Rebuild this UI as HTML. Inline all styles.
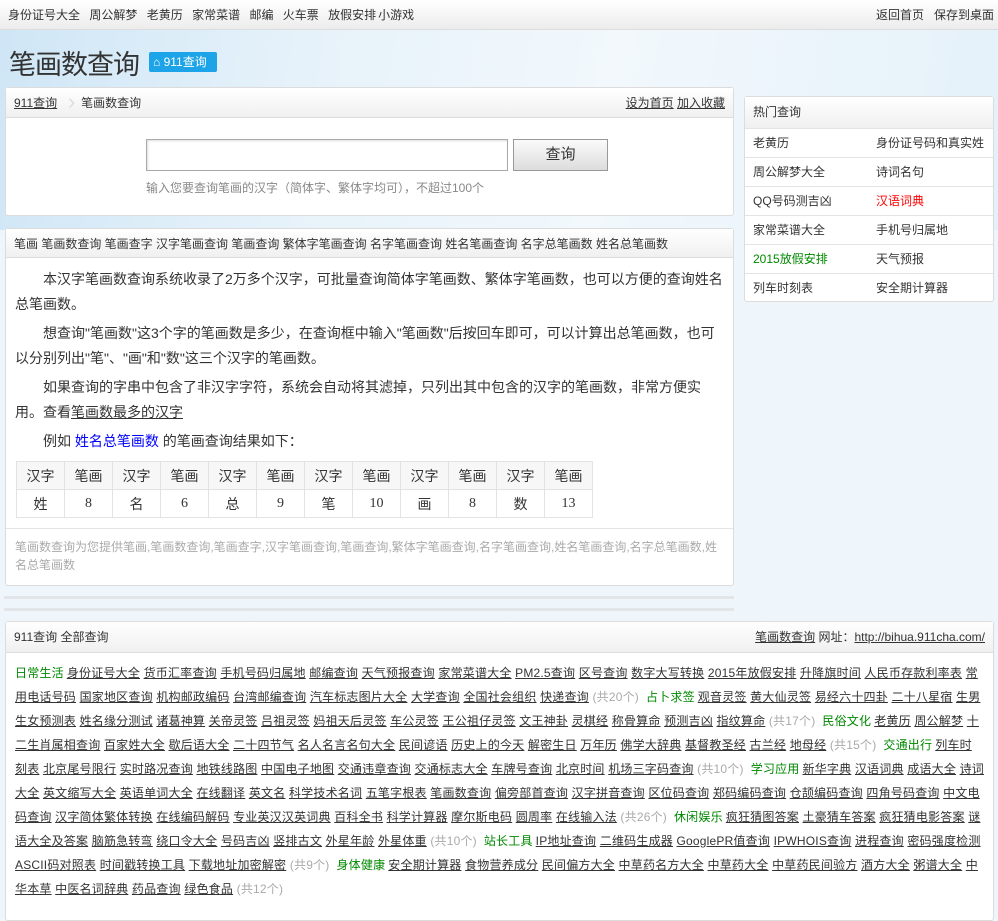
<!DOCTYPE html>
<html><head><meta charset="utf-8"><style>
*{margin:0;padding:0;box-sizing:border-box}
body{width:998px;height:907px;overflow:hidden;background:#eef5fb;font-family:"Liberation Sans","Noto Sans CJK SC",sans-serif;font-size:12px;color:#333;position:relative}
a{color:#333;text-decoration:underline}
.top{position:absolute;left:0;top:0;width:998px;height:30px;background:linear-gradient(#fff,#ececec);border-bottom:1px solid #ddd;font-size:12px;line-height:30px}
.top span{margin-left:8px;margin-right:-2px}
.sky{position:absolute;left:0;top:30px;width:998px;height:200px;background:linear-gradient(100deg,#cfe6f6 0%,#e6f2fa 30%,#f2f8fc 60%,#e4f1fa 100%)}
h1{position:absolute;left:9px;top:43px;font-size:27px;font-weight:normal;color:#333;letter-spacing:-1px}
.badge{position:absolute;left:149px;top:52px;height:20px;width:68px;background:#1ca3e8;color:#fff;font-size:12px;line-height:20px;padding-left:4px;border-radius:2px}
.box{position:absolute;background:#fff;border:1px solid #dcdcdc;border-radius:3px}
.hd{height:30px;background:linear-gradient(#fff,#f0f0f0);border-bottom:1px solid #ddd;line-height:30px;padding-left:8px;font-size:12px}
.p{font-size:14px;line-height:24.5px;text-indent:28px;margin-bottom:5px}
table{border-collapse:collapse;font-family:"Liberation Serif","Noto Sans CJK SC",serif;font-size:14px}
td{border:1px solid #e3e3e3;width:48px;height:28px;text-align:center}
tr:first-child td{background:#f7f7f7}
.all{padding:8px 9px 0 9px;font-size:12px;line-height:24px;letter-spacing:0.2px}
.g{color:#080;margin-right:3px;margin-left:3px}
.c{color:#aaa;margin-right:4px}
.side div.r{height:29px;border-top:1px solid #e4e4e4;line-height:29px;padding-left:8px;font-size:12px;position:relative}
.side div.r span{position:absolute;left:131px}
</style></head><body>
<div class="top"><span>身份证号大全</span> <span>周公解梦</span> <span>老黄历</span> <span>家常菜谱</span> <span>邮编</span> <span>火车票</span> <span>放假安排</span><span style="margin-left:4px">小游戏</span>
<div style="position:absolute;right:4px;top:0">返回首页&nbsp;&nbsp;&nbsp;保存到桌面</div></div>
<div class="sky"></div>
<h1>笔画数查询</h1>
<div class="badge">&#8962; 911查询</div>

<div class="box" style="left:5px;top:87px;width:729px;height:129px">
<div class="hd" style="position:relative"><a>911查询</a><span style="position:absolute;left:62px;top:0;color:#ddd;font-size:22px;line-height:28px">›</span><span style="margin-left:24px">笔画数查询</span>
<span style="position:absolute;right:8px;top:0"><a>设为首页</a> <a>加入收藏</a></span></div>
<div style="position:absolute;left:140px;top:51px;width:362px;height:32px;border:1px solid #aaa;box-shadow:inset 1px 1px 2px #ddd"></div>
<div style="position:absolute;left:507px;top:51px;width:95px;height:32px;border:1px solid #999;background:linear-gradient(#fafafa,#ddd);text-align:center;line-height:30px;font-size:15px">查询</div>
<div style="position:absolute;left:140px;top:91px;color:#888;font-size:12px">输入您要查询笔画的汉字（简体字、繁体字均可），不超过100个</div>
</div>

<div class="box" style="left:5px;top:228px;width:729px;height:358px">
<div class="hd" style="height:29px">笔画 笔画数查询 笔画查字 汉字笔画查询 笔画查询 繁体字笔画查询 名字笔画查询 姓名笔画查询 名字总笔画数 姓名总笔画数</div>
<div style="padding:9px 9px 0 9px">
<p class="p">本汉字笔画数查询系统收录了2万多个汉字，可批量查询简体字笔画数、繁体字笔画数，也可以方便的查询姓名总笔画数。</p>
<p class="p">想查询"笔画数"这3个字的笔画数是多少，在查询框中输入"笔画数"后按回车即可，可以计算出总笔画数，也可以分别列出"笔"、"画"和"数"这三个汉字的笔画数。</p>
<p class="p">如果查询的字串中包含了非汉字字符，系统会自动将其滤掉，只列出其中包含的汉字的笔画数，非常方便实用。查看<a>笔画数最多的汉字</a></p>
<p class="p">例如 <span style="color:#00f">姓名总笔画数</span> 的笔画查询结果如下：</p>
</div>
<table style="position:absolute;left:10px;top:232px">
<tr><td>汉字</td><td>笔画</td><td>汉字</td><td>笔画</td><td>汉字</td><td>笔画</td><td>汉字</td><td>笔画</td><td>汉字</td><td>笔画</td><td>汉字</td><td>笔画</td></tr>
<tr><td>姓</td><td>8</td><td>名</td><td>6</td><td>总</td><td>9</td><td>笔</td><td>10</td><td>画</td><td>8</td><td>数</td><td>13</td></tr></table>
<div style="position:absolute;left:0;top:299px;width:727px;border-top:1px solid #e4e4e4;padding:9px 9px;color:#aaa;font-size:12px;line-height:18px">笔画数查询为您提供笔画,笔画数查询,笔画查字,汉字笔画查询,笔画查询,繁体字笔画查询,名字笔画查询,姓名笔画查询,名字总笔画数,姓名总笔画数</div>
</div>
<div style="position:absolute;left:4px;top:596px;width:730px;height:3px;background:#e2e4e8"></div>
<div style="position:absolute;left:4px;top:608px;width:730px;height:3px;background:#e2e4e8"></div>

<div class="box side" style="left:744px;top:96px;width:250px;height:206px">
<div class="hd" style="height:31px;border-bottom:none">热门查询</div>
<div class="r">老黄历<span>身份证号码和真实姓</span></div>
<div class="r">周公解梦大全<span>诗词名句</span></div>
<div class="r">QQ号码测吉凶<span style="color:#f00">汉语词典</span></div>
<div class="r">家常菜谱大全<span>手机号归属地</span></div>
<div class="r"><b style="font-weight:normal;color:#080">2015放假安排</b><span>天气预报</span></div>
<div class="r">列车时刻表<span>安全期计算器</span></div>
</div>

<div class="box" style="left:5px;top:621px;width:989px;height:300px">
<div class="hd" style="height:31px;position:relative">911查询 全部查询<span style="position:absolute;right:8px;top:0"><a>笔画数查询</a> 网址：<a>http://bihua.911cha.com/</a></span></div>
<div class="all"><span class="g" style="margin-left:0">日常生活</span><a>身份证号大全</a> <a>货币汇率查询</a> <a>手机号码归属地</a> <a>邮编查询</a> <a>天气预报查询</a> <a>家常菜谱大全</a> <a>PM2.5查询</a> <a>区号查询</a> <a>数字大写转换</a> <a>2015年放假安排</a> <a>升降旗时间</a> <a>人民币存款利率表</a> <a>常用电话号码</a> <a>国家地区查询</a> <a>机构邮政编码</a> <a>台湾邮编查询</a> <a>汽车标志图片大全</a> <a>大学查询</a> <a>全国社会组织</a> <a>快递查询</a> <span class="c">(共20个)</span><span class="g">占卜求签</span><a>观音灵签</a> <a>黄大仙灵签</a> <a>易经六十四卦</a> <a>二十八星宿</a> <a>生男生女预测表</a> <a>姓名缘分测试</a> <a>诸葛神算</a> <a>关帝灵签</a> <a>吕祖灵签</a> <a>妈祖天后灵签</a> <a>车公灵签</a> <a>王公祖仔灵签</a> <a>文王神卦</a> <a>灵棋经</a> <a>称骨算命</a> <a>预测吉凶</a> <a>指纹算命</a> <span class="c">(共17个)</span><span class="g">民俗文化</span><a>老黄历</a> <a>周公解梦</a> <a>十二生肖属相查询</a> <a>百家姓大全</a> <a>歇后语大全</a> <a>二十四节气</a> <a>名人名言名句大全</a> <a>民间谚语</a> <a>历史上的今天</a> <a>解密生日</a> <a>万年历</a> <a>佛学大辞典</a> <a>基督教圣经</a> <a>古兰经</a> <a>地母经</a> <span class="c">(共15个)</span><span class="g">交通出行</span><a>列车时刻表</a> <a>北京尾号限行</a> <a>实时路况查询</a> <a>地铁线路图</a> <a>中国电子地图</a> <a>交通违章查询</a> <a>交通标志大全</a> <a>车牌号查询</a> <a>北京时间</a> <a>机场三字码查询</a> <span class="c">(共10个)</span><span class="g">学习应用</span><a>新华字典</a> <a>汉语词典</a> <a>成语大全</a> <a>诗词大全</a> <a>英文缩写大全</a> <a>英语单词大全</a> <a>在线翻译</a> <a>英文名</a> <a>科学技术名词</a> <a>五笔字根表</a> <a>笔画数查询</a> <a>偏旁部首查询</a> <a>汉字拼音查询</a> <a>区位码查询</a> <a>郑码编码查询</a> <a>仓颉编码查询</a> <a>四角号码查询</a> <a>中文电码查询</a> <a>汉字简体繁体转换</a> <a>在线编码解码</a> <a>专业英汉汉英词典</a> <a>百科全书</a> <a>科学计算器</a> <a>摩尔斯电码</a> <a>圆周率</a> <a>在线输入法</a> <span class="c">(共26个)</span><span class="g">休闲娱乐</span><a>疯狂猜图答案</a> <a>土豪猜车答案</a> <a>疯狂猜电影答案</a> <a>谜语大全及答案</a> <a>脑筋急转弯</a> <a>绕口令大全</a> <a>号码吉凶</a> <a>竖排古文</a> <a>外星年龄</a> <a>外星体重</a> <span class="c">(共10个)</span><span class="g">站长工具</span><a>IP地址查询</a> <a>二维码生成器</a> <a>GooglePR值查询</a> <a>IPWHOIS查询</a> <a>进程查询</a> <a>密码强度检测</a> <a>ASCII码对照表</a> <a>时间戳转换工具</a> <a>下载地址加密解密</a> <span class="c">(共9个)</span><span class="g">身体健康</span><a>安全期计算器</a> <a>食物营养成分</a> <a>民间偏方大全</a> <a>中草药名方大全</a> <a>中草药大全</a> <a>中草药民间验方</a> <a>酒方大全</a> <a>粥谱大全</a> <a>中华本草</a> <a>中医名词辞典</a> <a>药品查询</a> <a>绿色食品</a> <span class="c">(共12个)</span></div>
</div>
</body></html>
